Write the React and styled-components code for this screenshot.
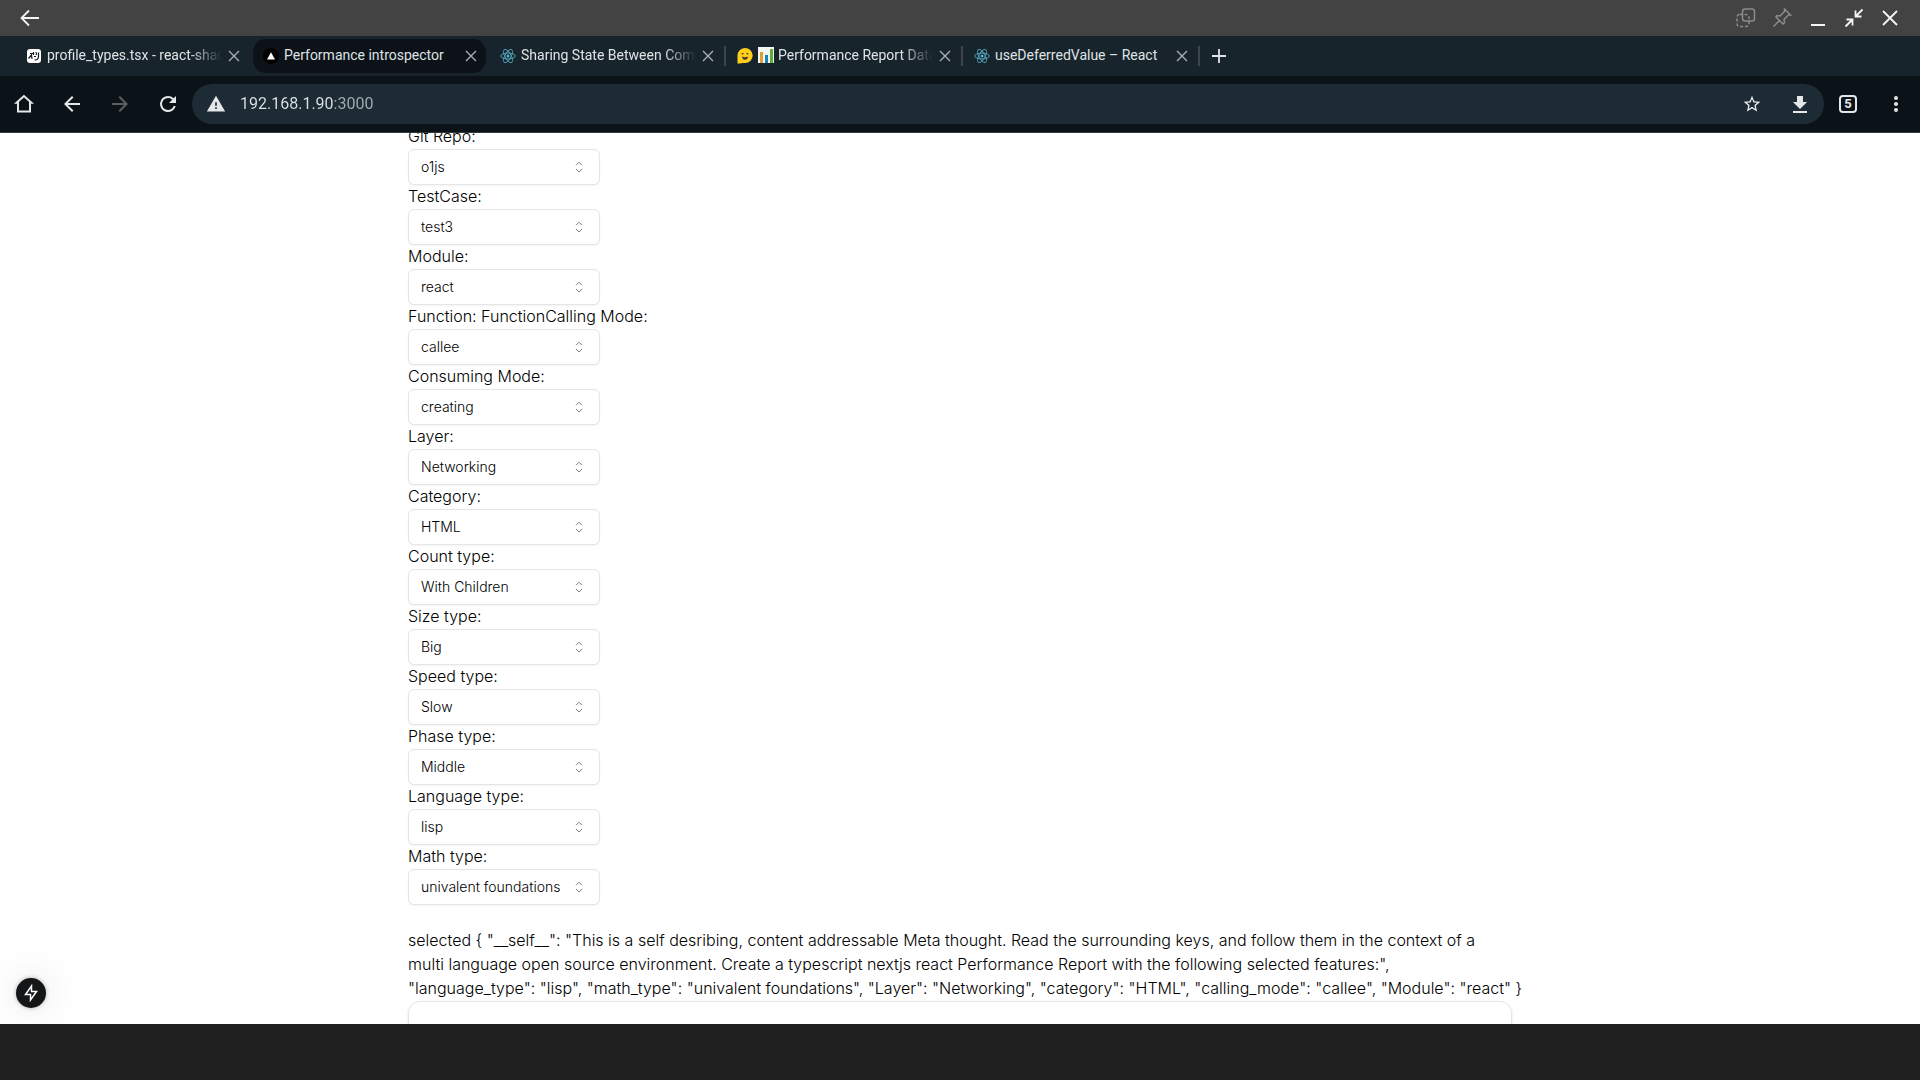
import React from "react";
import styled, { createGlobalStyle } from "styled-components";

const GlobalStyle = createGlobalStyle`
  *, *::before, *::after { box-sizing: border-box; }
  html, body, #root { height: 100%; }
  body { margin: 0; background: #1f1f1f; font-family: Inter, "Liberation Sans", sans-serif; }
  button, input, select { font: inherit; color: inherit; }
`;

const Window = styled.div`
  display: flex;
  flex-direction: column;
  height: 100vh;
  overflow: hidden;
`;

const TitleBar = styled.header`
  flex: none;
  display: flex;
  align-items: center;
  justify-content: space-between;
  height: 36px;
  padding: 0 12px;
  background: #434343;
  color: #f5f5f5;
`;

const Group = styled.div`
  display: flex;
  align-items: center;
`;

const IconButton = styled.button`
  flex: none;
  display: flex;
  align-items: center;
  justify-content: center;
  width: ${(p) => p.$size || 36}px;
  height: 36px;
  padding: 0;
  border: 0;
  background: none;
  color: ${(p) => (p.$dim ? "#8c8c8c" : "inherit")};
`;

const TabStrip = styled.nav`
  flex: none;
  display: flex;
  align-items: center;
  height: 40px;
  padding-left: 14px;
  background: #17242b;
  color: #dfe3e6;
`;

const Tab = styled.div`
  flex: none;
  display: flex;
  align-items: center;
  width: 237px;
  height: 34px;
  padding: 0 5px 0 10px;
  border: 0 solid transparent;
  border-width: 0 2px;
  border-radius: 14px;
  background: ${(p) => (p.$active ? "#0c1217" : "none")};
  background-clip: padding-box;
`;

const Divider = styled.span`
  flex: none;
  width: 2px;
  height: 20px;
  margin: 0 -1px;
  background: #3b464d;
`;

const TabLink = styled.a`
  flex: 1;
  min-width: 0;
  display: flex;
  align-items: center;
  gap: 5px;
  color: inherit;
  text-decoration: none;
  svg { flex: none; }
`;

const TabTitle = styled.span`
  flex: 1;
  min-width: 0;
  display: flex;
  align-items: center;
  gap: 4px;
  margin-right: 2px;
  padding-bottom: 2px;
  overflow: hidden;
  white-space: nowrap;
  font-family: Roboto, sans-serif;
  font-size: 14px;
  line-height: 24px;
  mask-image: ${(p) => (p.$fade ? "linear-gradient(to left, transparent, #000 32px)" : "none")};
`;

const CloseButton = styled.button`
  flex: none;
  display: flex;
  align-items: center;
  justify-content: center;
  width: 20px;
  height: 24px;
  padding: 0;
  border: 0;
  background: none;
  color: #a9b0b5;
`;

const Toolbar = styled.div`
  flex: none;
  display: flex;
  align-items: center;
  height: 57px;
  border-bottom: 1px solid #33373a;
  background: #0c1318;
  color: #e4e7e9;
`;

const AddressBar = styled.form`
  flex: 1;
  min-width: 0;
  display: flex;
  align-items: center;
  height: 40px;
  border-radius: 20px;
  background: #1c2b34;
`;

const AddressInput = styled.input`
  flex: 1;
  min-width: 0;
  padding: 0;
  border: 0;
  outline: 0;
  font-family: Roboto, sans-serif;
  font-size: 16px;
  line-height: 24px;
  background: linear-gradient(to right, #dfe4e7 94px, #a3adb3 94px);
  background-clip: text;
  color: transparent;
`;

const TabCount = styled.span`
  display: flex;
  align-items: center;
  justify-content: center;
  width: 18px;
  height: 18px;
  border: 2px solid currentColor;
  border-radius: 4px;
  font-family: Roboto, sans-serif;
  font-size: 13px;
  font-weight: 700;
  line-height: 14px;
`;

const Viewport = styled.div`
  flex: 1;
  min-height: 0;
  position: relative;
  overflow: hidden;
  background: #fff;
  color: #000;
`;

const Page = styled.main`
  max-width: 1152px;
  margin: -8px auto 0;
  padding: 0 24px;
  font-size: 16px;
  font-weight: 300;
  line-height: 24px;
`;

const Field = styled.div`
  label {
    display: block;
    padding-bottom: 2px;
    line-height: 22px;
  }
`;

const SelectBox = styled.div`
  display: grid;
  align-items: center;
  width: 192px;
  > * { grid-area: 1 / 1; }
  svg {
    justify-self: end;
    margin-right: 13px;
    opacity: 0.5;
    pointer-events: none;
  }
`;

const Select = styled.select`
  appearance: none;
  width: 100%;
  height: 36px;
  padding: 0 28px 1px 12px;
  border: 1px solid #e5e5e5;
  border-radius: 6px;
  background: #fff;
  box-shadow: 0 1px 2px rgba(0, 0, 0, 0.05);
  font-size: 14px;
  line-height: 20px;
`;

const Selected = styled.p`
  margin: 23px -16px 1px 0;
  white-space: pre-line;
`;

const Card = styled.section`
  height: 160px;
  border: 1px solid #e5e5e5;
  border-radius: 12px;
  box-shadow: 0 1px 3px rgba(0, 0, 0, 0.1);
`;

const DevButton = styled.button`
  position: absolute;
  left: 16px;
  bottom: 16px;
  display: flex;
  align-items: center;
  justify-content: center;
  width: 30px;
  height: 30px;
  padding: 0;
  border: 0;
  border-radius: 50%;
  background: #151618;
  color: #fff;
  box-shadow: 0 0 40px rgba(0, 0, 0, 0.14), 0 0 4px rgba(0, 0, 0, 0.3);
`;

const SystemBar = styled.footer`
  flex: none;
  height: 56px;
  background: #1f1f1f;
`;

const Stroke = ({ size = 24, width = 2, d, children }) => (
  <svg width={size} height={size} viewBox="0 0 24 24" fill="none" stroke="currentColor" strokeWidth={width} aria-hidden="true">
    {d && <path d={d} />}
    {children}
  </svg>
);

const Fill = ({ size = 24, d }) => (
  <svg width={size} height={size} viewBox="0 0 24 24" fill="currentColor" aria-hidden="true">
    <path d={d} />
  </svg>
);

const ARROW_LEFT = "M20 11H7.83l5.59-5.59L12 4l-8 8 8 8 1.41-1.41L7.83 13H20v-2z";
const ARROW_RIGHT = "M12 4l-1.410 1.410L16.170 11H4v2h12.170l-5.580 5.590L12 20l8-8z";

const ReactIcon = () => (
  <svg width="16" height="16" viewBox="0 0 16 16" fill="none" stroke="#4f9fb5" aria-hidden="true">
    <ellipse cx="8" cy="8" rx="7.3" ry="3" />
    <ellipse cx="8" cy="8" rx="7.3" ry="3" transform="rotate(60 8 8)" />
    <ellipse cx="8" cy="8" rx="7.3" ry="3" transform="rotate(120 8 8)" />
    <circle cx="8" cy="8" r="1.5" fill="#58b4cc" stroke="none" />
  </svg>
);

const ProfileIcon = () => (
  <svg width="16" height="16" viewBox="0 0 16 16" fill="none" aria-hidden="true">
    <rect x="1" y="1" width="14" height="14" rx="3" fill="#fff" />
    <path d="M2.500 10.500L5.500 7l.5 4M4 5.500h3M7.500 4v3M8 8.500h2M9.500 4.500c1 0 1.500 1 .5 2.500M8.500 12c3.500 0 4-1.500 4-3.500V4.500" stroke="#17191b" strokeWidth="1.200" />
  </svg>
);

const TriangleIcon = () => (
  <svg width="16" height="16" viewBox="0 0 16 16" aria-hidden="true">
    <circle cx="8" cy="8" r="8" fill="#000" />
    <path d="M8 4.200l4 7.300H4z" fill="#fff" />
  </svg>
);

const FaceIcon = () => (
  <svg width="16" height="16" viewBox="0 0 16 16" fill="none" aria-hidden="true">
    <path d="M.5 15.500V8A7.600 7.500 0 1 1 8.200 15C5 15 3 15.500.5 15.500z" fill="#ffcf1c" />
    <path d="M4.800 6.200q.8-1 1.600 0M9.600 6.200q.8-1 1.600 0" stroke="#3f3522" strokeWidth="1.200" />
    <path d="M5 8.500q3 1.500 6 0-.5 3.300-3 3.300t-3-3.300z" fill="#4b3327" />
  </svg>
);

const ChartIcon = () => (
  <svg width="16" height="16" viewBox="0 0 16 16" aria-hidden="true">
    <path d="M0 0h16v16H0z" fill="#f4f6f6" />
    <path d="M2 5h3v11H2z" fill="#e0a030" />
    <path d="M7 8h3v8H7z" fill="#1684b8" />
    <path d="M12 2h3v14h-3z" fill="#5cb230" />
  </svg>
);

const TABS = [
  { title: "profile_types.tsx - react-shadcn", icon: ProfileIcon, fade: true },
  { title: "Performance introspector", icon: TriangleIcon, active: true },
  { title: "Sharing State Between Components", icon: ReactIcon, fade: true, divider: true },
  { title: "Performance Report Data", icon: FaceIcon, lead: ChartIcon, fade: true, divider: true },
  { title: "useDeferredValue – React", icon: ReactIcon, divider: true },
];

const FIELDS = [
  ["Git Repo:", "o1js"],
  ["TestCase:", "test3"],
  ["Module:", "react"],
  ["Function: FunctionCalling Mode:", "callee"],
  ["Consuming Mode:", "creating"],
  ["Layer:", "Networking"],
  ["Category:", "HTML"],
  ["Count type:", "With Children"],
  ["Size type:", "Big"],
  ["Speed type:", "Slow"],
  ["Phase type:", "Middle"],
  ["Language type:", "lisp"],
  ["Math type:", "univalent foundations"],
];

const SELECTED = `selected { "__self__": "This is a self desribing, content addressable Meta thought. Read the surrounding keys, and follow them in the context of a
multi language open source environment. Create a typescript nextjs react Performance Report with the following selected features:",
"language_type": "lisp", "math_type": "univalent foundations", "Layer": "Networking", "category": "HTML", "calling_mode": "callee", "Module": "react" }`;

function BrowserTab({ title, icon: Icon, lead: Lead, fade, active, divider }) {
  return (
    <>
      <Tab $active={active}>
        <TabLink href="#">
          <Icon />
          <TabTitle $fade={fade}>
            {Lead && <Lead />}
            {title}
          </TabTitle>
        </TabLink>
        <CloseButton aria-label="Close tab">
          <Stroke size={16} d="M4.500 4.500l15 15M19.500 4.500l-15 15" />
        </CloseButton>
      </Tab>
      {divider && <Divider />}
    </>
  );
}

function SelectField({ id, label, value }) {
  return (
    <Field>
      <label htmlFor={id}>{label}</label>
      <SelectBox>
        <Select id={id} defaultValue={value}>
          <option>{value}</option>
        </Select>
        <svg width="16" height="16" viewBox="0 0 16 16" fill="none" stroke="currentColor" strokeLinecap="round" strokeLinejoin="round" aria-hidden="true">
          <path d="M5.200 6L8 3.200 10.800 6M5.200 10.200L8 13l2.800-2.800" />
        </svg>
      </SelectBox>
    </Field>
  );
}

export default function App() {
  return (
    <Window>
      <GlobalStyle />
      <TitleBar>
        <IconButton aria-label="Back">
          <Stroke width={1.8} d="M21 12H3.500M11 4.500L3.500 12l7.500 7.500" />
        </IconButton>
        <Group>
          <IconButton $dim aria-label="Opacity">
            <Stroke width={1.5}>
              <rect x="8.500" y="3" width="12" height="12" rx="2.500" />
              <rect x="3" y="8.500" width="12" height="12" rx="2.500" strokeDasharray="3 2" />
            </Stroke>
          </IconButton>
          <IconButton $dim aria-label="Pin">
            <Stroke width={1.5} d="M3.500 20.500l6-6M6 11l7 7 1.500-1.500-.5-3 4.500-4.500 2 0L14.500 3v2.500L10 10l-3-.5z" />
          </IconButton>
          <IconButton aria-label="Minimize">
            <Stroke d="M5 19h14" />
          </IconButton>
          <IconButton aria-label="Restore">
            <Stroke width={1.8} d="M20.500 3.500L13.500 10.500M13.500 4.500v6h6M3.500 20.500l7-7M4.500 13.500h6v6" />
          </IconButton>
          <IconButton aria-label="Close">
            <Stroke width={1.8} d="M5 5l14 14M19 5L5 19" />
          </IconButton>
        </Group>
      </TitleBar>

      <TabStrip>
        {TABS.map((tab) => (
          <BrowserTab key={tab.title} {...tab} />
        ))}
        <IconButton $size={40} aria-label="New tab">
          <Stroke width={1.8} d="M12 5v14M5 12h14" />
        </IconButton>
      </TabStrip>

      <Toolbar>
        <IconButton $size={48} aria-label="Home">
          <Stroke width={2} d="M12 4L4.500 10.800H6V19.500H18V10.800H19.500z" />
        </IconButton>
        <IconButton $size={48} aria-label="Previous page">
          <Fill d={ARROW_LEFT} />
        </IconButton>
        <IconButton $size={48} $dim aria-label="Next page">
          <svg width="24" height="24" viewBox="0 0 24 24" fill="#5a5f63" aria-hidden="true">
            <path d={ARROW_RIGHT} />
          </svg>
        </IconButton>
        <IconButton $size={48} aria-label="Reload">
          <Fill d="M17.650 6.350A7.958 7.958 0 0 0 12 4a8 8 0 1 0 7.730 10h-2.080A6 6 0 1 1 12 6c1.660 0 3.140.69 4.220 1.780L13 11h7V4l-2.350 2.350z" />
        </IconButton>
        <AddressBar>
          <IconButton as="span" $size={48}>
            <Fill size={20} d="M1 21h22L12 2 1 21zm12-3h-2v-2h2v2zm0-4h-2v-4h2v4z" />
          </IconButton>
          <AddressInput aria-label="Address" defaultValue="192.168.1.90:3000" />
          <IconButton type="button" $size={48} aria-label="Bookmark">
            <Fill size={20} d="M22 9.240l-7.190-.62L12 2 9.190 8.630 2 9.240l5.460 4.730L5.820 21 12 17.270 18.180 21l-1.630-7.030L22 9.240zM12 15.400l-3.760 2.270 1-4.280-3.320-2.880 4.380-.38L12 6.100l1.710 4.040 4.380.38-3.320 2.880 1 4.280L12 15.400z" />
          </IconButton>
          <IconButton type="button" $size={48} aria-label="Download">
            <Fill d="M19 10h-4V4H9v6H5l7 7 7-7zM5 19v2h14v-2H5z" />
          </IconButton>
        </AddressBar>
        <IconButton $size={48} aria-label="5 open tabs">
          <TabCount>5</TabCount>
        </IconButton>
        <IconButton $size={48} aria-label="Menu">
          <Fill d="M12 8a2 2 0 1 0 0-4 2 2 0 0 0 0 4zm0 2a2 2 0 1 0 0 4 2 2 0 0 0 0-4zm0 6a2 2 0 1 0 0 4 2 2 0 0 0 0-4z" />
        </IconButton>
      </Toolbar>

      <Viewport>
        <Page>
          {FIELDS.map(([label, value], i) => (
            <SelectField key={label} id={`field-${i}`} label={label} value={value} />
          ))}
          <Selected>{SELECTED}</Selected>
          <Card />
        </Page>
        <DevButton aria-label="Developer tools">
          <svg width="18" height="18" viewBox="0 0 18 18" fill="none" stroke="currentColor" strokeWidth="1.500" aria-hidden="true">
            <path d="M9.500 2v5.500H14.500L8.500 16v-5.500H3.500z" />
          </svg>
        </DevButton>
      </Viewport>
      <SystemBar />
    </Window>
  );
}
